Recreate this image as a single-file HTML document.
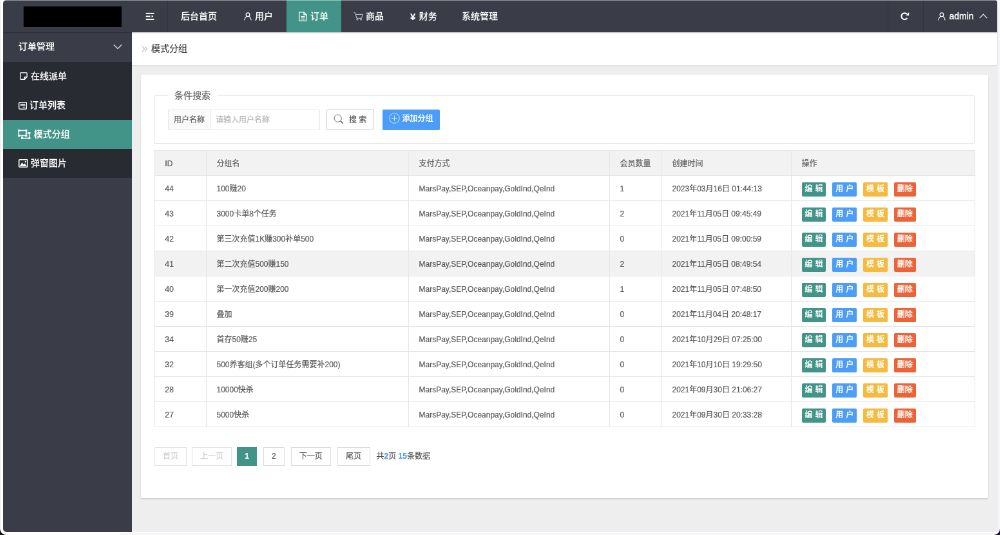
<!DOCTYPE html>
<html lang="zh-CN">
<head>
<meta charset="utf-8">
<title>模式分组</title>
<style>
*{box-sizing:border-box;margin:0;padding:0}
html,body{width:1000px;height:535px;overflow:hidden;background:#fff}
body{position:relative;font-family:"Liberation Sans","Noto Sans CJK SC",sans-serif;font-size:14px;color:#666;-webkit-text-stroke-width:.22px}
#frame{position:absolute;left:3px;top:0;width:994.9px;height:532.3px;overflow:hidden;border-radius:4px 3px 3px 4px;background:#eee}
#app{will-change:transform;position:absolute;left:0;top:0;width:1546px;height:828px;transform:scale(0.6443);transform-origin:0 0;background:#eee}
.abs{position:absolute}
#header{border-radius:0 3px 0 0;position:absolute;left:0;top:0;width:1543px;height:50px;background:#3a3d48;box-shadow:0 1px 2px rgba(0,0,0,.25)}
#header .it{-webkit-text-stroke-width:.1px;position:absolute;top:0;height:50px;line-height:50px;color:#fff;font-size:14px;white-space:nowrap;font-weight:500}
#header .sep{position:absolute;top:0;width:1px;height:50px;background:rgba(0,0,0,.12)}
#side{-webkit-text-stroke-width:.1px;position:absolute;left:0;top:50px;width:200px;height:778px;background:#3a3d48}
#side .grp{position:absolute;left:0;top:0;width:200px;height:45px;line-height:45px;color:#fff;font-weight:500}
#side .sub{position:absolute;left:0;top:45.7px;width:200px;height:180px;background:#292b32}
#side .si{position:absolute;left:0;width:200px;height:45px;line-height:45px;color:#fff;font-weight:500}
#side .si.on{background:#429488}
#side svg{position:absolute}
#bc{position:absolute;left:200px;top:50px;width:1343px;height:51px;background:#fff;box-shadow:0 1px 2px rgba(0,0,0,.1);line-height:50px;color:#444}
#card{position:absolute;left:214px;top:115.5px;width:1314.8px;height:657.3px;background:#fff;box-shadow:0 1.5px 2px rgba(0,0,0,.13);border-radius:2px}
#fs{position:absolute;left:21px;top:32.5px;width:1273px;height:75px;border:1px solid #e6e6e6}
#fs .lg{position:absolute;left:20px;top:-12px;height:22px;line-height:22px;padding:0 10px;background:#fff;font-size:14px;color:#666}
.lab{position:absolute;left:20px;top:21px;width:66px;height:32px;line-height:30px;border:1px solid #e6e6e6;background:#fafafa;font-size:12px;color:#666;text-align:center;border-radius:2px 0 0 2px}
.inp{position:absolute;left:85px;top:21px;width:171px;height:32px;line-height:30px;border:1px solid #e6e6e6;background:#fff;font-size:12px;color:#b8b8b8;padding-left:8px;border-radius:0 2px 2px 0}
.sbtn{position:absolute;left:266px;top:21px;width:74px;height:32px;line-height:30px;border:1px solid #c9c9c9;background:#fff;font-size:12px;color:#555;border-radius:2px}
.abtn{position:absolute;left:353px;top:21px;width:89px;height:32px;line-height:29.5px;background:#4c9df8;font-size:12px;color:#fff;border-radius:2px;font-weight:500}
table{position:absolute;left:21px;top:117.5px;width:1273px;border-collapse:collapse;table-layout:fixed;font-size:12px;color:#5c5c5c}
th,td{height:39px;line-height:36px;border:1px solid #e6e6e6;padding:1.4px 14px 0 15.5px;text-align:left;font-weight:400;white-space:nowrap;overflow:hidden}
th{background:#f2f2f2;color:#606060}
tr.hov td{background:#f2f2f2}
.b{position:relative;top:.3px;left:.6px;display:inline-block;height:21.5px;line-height:21.5px;padding:0 5px;word-spacing:.5px;font-size:12px;color:#fff;border-radius:2px;margin-right:9.9px;vertical-align:middle;font-weight:500}
.b.g{background:#429488}.b.u{background:#4c9df8}.b.y{background:#f4bb40}.b.r{background:#ec6337}
.pg{position:absolute;top:578px;height:29.5px;line-height:27px;border:1px solid #dcdcdc;background:#fff;font-size:12px;color:#5a5a5a;text-align:center}
.pg.dis{color:#cfcfcf;border-color:#e4e4e4}
.pg.cur{background:#429488;border-color:#429488;color:#fff;font-weight:700}
.pgt{position:absolute;top:578px;height:29.5px;line-height:29px;font-size:12px;color:#555;white-space:nowrap}
.pgt b{color:#4c9df8;font-weight:700}
</style>
</head>
<body>
<div id="frame">
<div id="app">

<div id="side">
  <div class="grp"><span class="abs" style="left:24px">订单管理</span>
    <svg style="left:171px;top:18px" width="14" height="9" viewBox="0 0 14 9"><path d="M1 1.5 L7 7.5 L13 1.5" fill="none" stroke="#d8d9dc" stroke-width="1.5"/></svg>
  </div>
  <div class="sub">
    <div class="si" style="top:0"><svg style="left:25.5px;top:16.5px" width="12" height="12" viewBox="0 0 12 12"><path d="M1.8 .8h8.400a1 1 0 0 1 1 1v5.700L7.500 11.200H1.800a1 1 0 0 1-1-1V1.800a1 1 0 0 1 1-1z M7.500 11V7.500H11" fill="none" stroke="#fff" stroke-width="1.350"/></svg><span class="abs" style="left:43px">在线派单</span></div>
    <div class="si" style="top:45px"><svg style="left:23.800px;top:17px" width="13.400" height="12" viewBox="0 0 13.400 12"><rect x=".75" y=".75" width="11.900" height="10.500" rx="1.600" fill="none" stroke="#fff" stroke-width="1.400"/><rect x="3" y="3" width="7.400" height="3.200" fill="#fff" fill-opacity=".75"/><path d="M6.500 8.300h4" stroke="#fff" stroke-opacity=".8" stroke-width="1.100"/></svg><span class="abs" style="left:41px">订单列表</span></div>
    <div class="si on" style="top:90px"><svg style="left:23px;top:15px" width="20" height="15" viewBox="0 0 20 15"><g fill="none" stroke="#fff" stroke-width="1.4"><rect x="1.5" y="1.5" width="11.5" height="8"/><path d="M13 5.5h5v8H6.5V9.5"/></g><g fill="#fff"><rect x="0" y="0" width="3" height="3"/><rect x="11.5" y="0" width="3" height="3"/><rect x="0" y="8" width="3" height="3"/><rect x="11.5" y="8" width="3" height="3"/><rect x="16.5" y="4" width="3" height="3"/><rect x="16.5" y="12" width="3" height="3"/><rect x="5" y="12" width="3" height="3"/></g></svg><span class="abs" style="left:47.7px">模式分组</span></div>
    <div class="si" style="top:135px"><svg style="left:24px;top:16px" width="15" height="13" viewBox="0 0 15 13"><rect x="0.8" y="0.8" width="13.4" height="11.4" rx="1" fill="none" stroke="#fff" stroke-width="1.5"/><path d="M2 11 L5.5 5 L8 8.5 L10 6.5 L13 11z" fill="#fff"/><circle cx="11" cy="4" r="1.3" fill="#fff"/></svg><span class="abs" style="left:43px">弹窗图片</span></div>
  </div>
</div>

<div id="bc">
  <svg class="abs" style="left:15px;top:21px" width="10" height="10" viewBox="0 0 10 10"><path d="M1 1l3.5 4L1 9M5 1l3.5 4L5 9" fill="none" stroke="#9a9a9a" stroke-width="1"/></svg>
  <span class="abs" style="left:30px">模式分组</span>
</div>

<div id="header">
  <div class="abs" style="left:32px;top:10px;width:152px;height:32px;background:#000"></div>
  <svg class="abs" style="left:221px;top:19px" width="14" height="13" viewBox="0 0 14 13"><g fill="#fff"><rect x=".7" y=".9" width="12.800" height="1.900"/><rect x=".7" y="5.400" width="6.800" height="1.900"/><path d="M9.600 4.200l2.700 2.150-2.700 2.150z"/><rect x=".7" y="10.100" width="12.800" height="1.900"/></g></svg>
  <div class="sep" style="left:255px"></div>
  <div class="it" style="left:276px">后台首页</div>
  <div class="it" style="left:373.500px"><svg class="abs" style="left:0;top:19px" width="12" height="12.500" viewBox="0 0 12 12.500"><g fill="none" stroke="#fff" stroke-width="1.250" stroke-linecap="round"><circle cx="6" cy="3.700" r="2.800"/><path d="M.9 11.800C1.300 9 2.700 7.300 4.300 6.300M11.100 11.800C10.700 9 9.300 7.300 7.700 6.300"/></g></svg><span style="margin-left:17.500px">用户</span></div>
  <div class="abs" style="left:439.5px;top:0;width:85.5px;height:50px;background:#429488"></div>
  <div class="it" style="left:459px"><svg class="abs" style="left:0;top:18px" width="13" height="15" viewBox="0 0 13 15"><g fill="none" stroke="#fff" stroke-width="1.3"><path d="M1.5 .8h6.500l4 4v8.700a.8.800 0 0 1-.8.800H1.500a.8.800 0 0 1-.8-.8V1.600a.8.800 0 0 1 .8-.8z"/><path d="M8 .8v4h4"/><path d="M3.500 7.500h6M3.500 9.700h6M3.500 11.900h6" stroke-width="1"/></g></svg><span style="margin-left:18px">订单</span></div>
  <div class="it" style="left:544px"><svg class="abs" style="left:0;top:19px" width="15" height="13" viewBox="0 0 15 13"><g fill="none" stroke="#d0d1d5" stroke-width="1"><path d="M.5 .8h2l2.500 8.500h7.500l1.700-6H4"/><circle cx="5.800" cy="11.300" r="1"/><circle cx="11.500" cy="11.300" r="1"/></g></svg><span style="margin-left:19px">商品</span></div>
  <div class="it" style="left:632px"><b style="font-weight:700;font-size:15px;margin-right:1.500px;position:relative;top:.5px">¥</b> 财务</div>
  <div class="it" style="left:712px">系统管理</div>
  <div class="sep" style="left:1373px"></div>
  <svg class="abs" style="left:1393.300px;top:19.200px" width="13.700" height="12.720" viewBox="0 0 14 13"><path d="M10.600 9.200A5 5 0 1 1 10.200 3" fill="none" stroke="#fff" stroke-width="2.200"/><path d="M8.300 5.200L13.500 5.200L13.500 0z" fill="#fff"/></svg>
  <div class="sep" style="left:1428px"></div>
  <div class="it" style="left:1450.500px"><svg class="abs" style="left:0;top:19px" width="12" height="12.500" viewBox="0 0 12 12.500"><g fill="none" stroke="#fff" stroke-width="1.250" stroke-linecap="round"><circle cx="6" cy="3.700" r="2.800"/><path d="M.9 11.800C1.300 9 2.700 7.300 4.300 6.300M11.100 11.800C10.700 9 9.300 7.300 7.700 6.300"/></g></svg><span style="margin-left:18px;font-weight:400;-webkit-text-stroke-width:.3px">admin</span>
    <svg class="abs" style="left:64px;top:21px" width="13" height="8" viewBox="0 0 13 8"><path d="M.8 7L6.500 1.200L12.200 7" fill="none" stroke="#d8d9dc" stroke-width="1.300"/></svg></div>
</div>

<div id="card">
  <div id="fs">
    <div class="lg">条件搜索</div>
    <div class="lab">用户名称</div>
    <div class="inp">请输入用户名称</div>
    <div class="sbtn"><svg class="abs" style="left:10px;top:5.500px" width="16" height="16" viewBox="0 0 18 18"><g fill="none" stroke="#666" stroke-width="1.100"><circle cx="7.500" cy="7.500" r="6.300"/><path d="M12 12l4.500 4.500" stroke-width="1.800"/></g></svg><span class="abs" style="left:34px">搜 索</span></div>
    <div class="abtn"><svg class="abs" style="left:9.500px;top:4.800px" width="17" height="17" viewBox="0 0 17 17"><g fill="none" stroke="#fff" stroke-opacity=".8" stroke-width=".9"><circle cx="8.500" cy="8.500" r="7.800"/><path d="M8.500 4.500v8M4.500 8.500h8"/></g></svg><span class="abs" style="left:30.500px">添加分组</span></div>
  </div>
  <table>
    <colgroup><col style="width:80px"><col style="width:314px"><col style="width:312px"><col style="width:81px"><col style="width:201px"><col style="width:285px"></colgroup>
    <tr><th>ID</th><th>分组名</th><th>支付方式</th><th>会员数量</th><th>创建时间</th><th>操作</th></tr>
<tr><td>44</td><td>100赚20</td><td>MarsPay,SEP,Oceanpay,GoldInd,QeInd</td><td>1</td><td>2023年03月16日 01:44:13</td><td class="ops" style="padding-left:15px"><a class="b g">编 辑</a><a class="b u">用 户</a><a class="b y">模 板</a><a class="b r">删除</a></td></tr>
<tr><td>43</td><td>3000卡单8个任务</td><td>MarsPay,SEP,Oceanpay,GoldInd,QeInd</td><td>2</td><td>2021年11月05日 09:45:49</td><td class="ops" style="padding-left:15px"><a class="b g">编 辑</a><a class="b u">用 户</a><a class="b y">模 板</a><a class="b r">删除</a></td></tr>
<tr><td>42</td><td>第三次充值1K赚300补单500</td><td>MarsPay,SEP,Oceanpay,GoldInd,QeInd</td><td>0</td><td>2021年11月05日 09:00:59</td><td class="ops" style="padding-left:15px"><a class="b g">编 辑</a><a class="b u">用 户</a><a class="b y">模 板</a><a class="b r">删除</a></td></tr>
<tr class="hov"><td>41</td><td>第二次充值500赚150</td><td>MarsPay,SEP,Oceanpay,GoldInd,QeInd</td><td>2</td><td>2021年11月05日 08:49:54</td><td class="ops" style="padding-left:15px"><a class="b g">编 辑</a><a class="b u">用 户</a><a class="b y">模 板</a><a class="b r">删除</a></td></tr>
<tr><td>40</td><td>第一次充值200赚200</td><td>MarsPay,SEP,Oceanpay,GoldInd,QeInd</td><td>1</td><td>2021年11月05日 07:48:50</td><td class="ops" style="padding-left:15px"><a class="b g">编 辑</a><a class="b u">用 户</a><a class="b y">模 板</a><a class="b r">删除</a></td></tr>
<tr><td>39</td><td>叠加</td><td>MarsPay,SEP,Oceanpay,GoldInd,QeInd</td><td>0</td><td>2021年11月04日 20:48:17</td><td class="ops" style="padding-left:15px"><a class="b g">编 辑</a><a class="b u">用 户</a><a class="b y">模 板</a><a class="b r">删除</a></td></tr>
<tr><td>34</td><td>首存50赚25</td><td>MarsPay,SEP,Oceanpay,GoldInd,QeInd</td><td>0</td><td>2021年10月29日 07:25:00</td><td class="ops" style="padding-left:15px"><a class="b g">编 辑</a><a class="b u">用 户</a><a class="b y">模 板</a><a class="b r">删除</a></td></tr>
<tr><td>32</td><td>500养客组(多个订单任务需要补200)</td><td>MarsPay,SEP,Oceanpay,GoldInd,QeInd</td><td>0</td><td>2021年10月10日 19:29:50</td><td class="ops" style="padding-left:15px"><a class="b g">编 辑</a><a class="b u">用 户</a><a class="b y">模 板</a><a class="b r">删除</a></td></tr>
<tr><td>28</td><td>10000快杀</td><td>MarsPay,SEP,Oceanpay,GoldInd,QeInd</td><td>0</td><td>2021年09月30日 21:06:27</td><td class="ops" style="padding-left:15px"><a class="b g">编 辑</a><a class="b u">用 户</a><a class="b y">模 板</a><a class="b r">删除</a></td></tr>
<tr><td>27</td><td>5000快杀</td><td>MarsPay,SEP,Oceanpay,GoldInd,QeInd</td><td>0</td><td>2021年09月30日 20:33:28</td><td class="ops" style="padding-left:15px"><a class="b g">编 辑</a><a class="b u">用 户</a><a class="b y">模 板</a><a class="b r">删除</a></td></tr>
  </table>
  <div class="pg dis" style="left:21px;width:50px">首页</div>
  <div class="pg dis" style="left:79px;width:62px">上一页</div>
  <div class="pg cur" style="left:149px;width:31px">1</div>
  <div class="pg" style="left:189.500px;width:33.500px">2</div>
  <div class="pg" style="left:232.500px;width:62.500px">下一页</div>
  <div class="pg" style="left:304.500px;width:51px">尾页</div>
  <div class="pgt" style="left:365.500px">共<b>2</b>页 <b>15</b>条数据</div>
</div>

</div>
</div>
<!-- window chrome: top highlight line + bottom corner notches -->
<div class="abs" style="left:3px;top:0;width:994.2px;height:1px;background:rgba(255,255,255,.34);border-radius:4px 3px 0 0"></div>
<div class="abs" style="left:0;top:0;width:1px;height:535px;background:#f1f1f3"></div>
<div class="abs" style="left:998px;top:0;width:2px;height:535px;background:#f6f6f9"></div>
<div class="abs" style="left:120px;top:533px;width:880px;height:2px;background:#f6f6f9"></div>
<div class="abs" style="left:0;top:529px;width:6px;height:6px;background:radial-gradient(circle at 6px 0,rgba(0,0,0,0) 5.4px,#15151a 6.2px)"></div>
<div class="abs" style="left:994px;top:529px;width:6px;height:6px;background:radial-gradient(circle at 0 0,rgba(0,0,0,0) 5.4px,#1a1040 6.2px)"></div>
</body>
</html>
